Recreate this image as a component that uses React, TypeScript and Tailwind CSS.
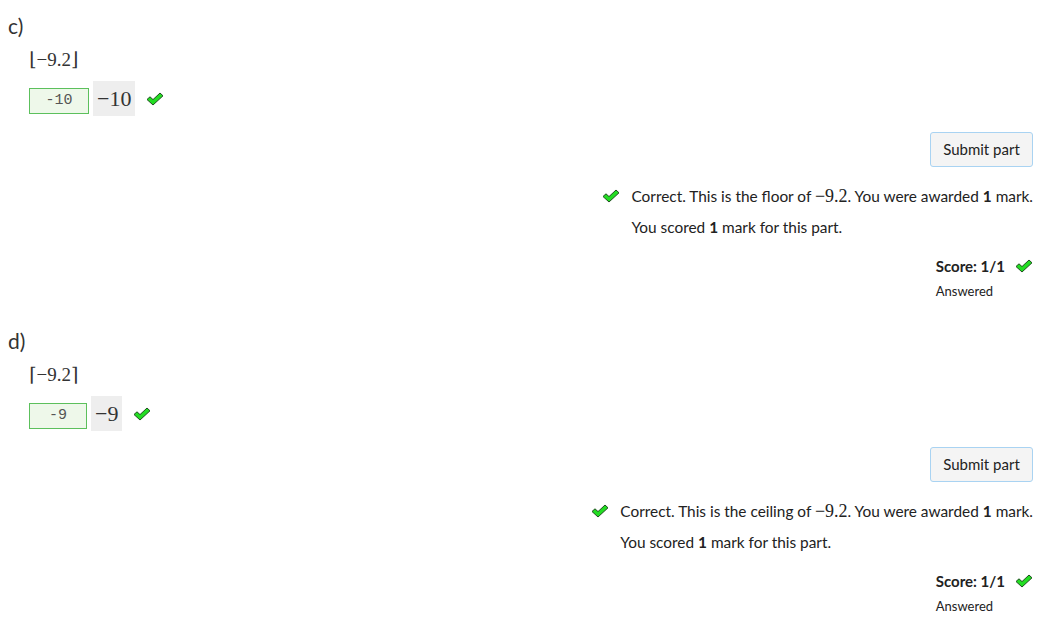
import React from 'react';

type PartProps = {
  label: string;
  question: string;
  answer: string;
  inputWidth: string;
  preview: string;
  word: string;
};

const Tick: React.FC<{ className?: string }> = ({ className }) => (
  <svg viewBox="0 0 18 14" width={18} height={14} className={className} aria-hidden="true">
    <polygon
      points="1,7.5 4,4.8 7,7.6 14,1 17,3.8 7,13"
      fill="#22dd22"
      stroke="#1f4f1f"
      strokeWidth={1}
      strokeLinejoin="round"
    />
  </svg>
);

const serif = { fontFamily: '"Liberation Serif", "DejaVu Serif", serif' };

const Part: React.FC<PartProps> = ({ label, question, answer, inputWidth, preview, word }) => {
  return (
    <div className="pt-[12px] pb-[14px]">
      <div className="h-[28px] pl-[8px] text-[21px] leading-[28px] text-[#333]">{label}</div>
      <div className="pl-[29px]">
        <div className="mt-[8px] h-[24px] text-[19px] leading-[24px] text-[#333]" style={serif}>
          {question}
        </div>
        <div className="mt-[9px] flex items-start">
          <div
            className={`${inputWidth} mt-[7px] flex h-[26px] items-center justify-center border border-[#5cc05c] bg-[#eef8ea] font-['Liberation_Mono',monospace] text-[15px] text-[#555]`}
          >
            {answer}
          </div>
          <div className="ml-[4px] flex h-[35px] items-center bg-[#eeeeee] px-[4px] text-[22px] text-[#333]" style={serif}>
            {preview}
          </div>
          <Tick className="ml-[11px] mt-[11px]" />
        </div>
      </div>
      <div className="mt-[16px] flex justify-end pr-[6px]">
        <button className="h-[35px] w-[103px] rounded-[3px] border border-[#a9d3f2] bg-[#f4f4f4] text-[15px] text-[#222]">
          Submit part
        </button>
      </div>
      <div className="mt-[14px] flex justify-end pr-[6px] text-[15.4px] text-[#222]">
        <div className="flex items-start">
          <Tick className="mt-[8px] mr-[11px]" />
          <div>
            <div className="h-[31px] leading-[31px]">
              Correct. This is the {word} of <span className="text-[18px]" style={serif}>−9.2</span>. You were awarded{' '}
              <b>1</b> mark.
            </div>
            <div className="h-[31px] leading-[31px]">
              You scored <b>1</b> mark for this part.
            </div>
          </div>
        </div>
      </div>
      <div className="mt-[11px] flex justify-end pr-[6px]">
        <div className="text-[#222]">
          <div className="flex h-[24px] items-center text-[15px] font-bold">
            Score: 1/1
            <Tick className="ml-[10px]" />
          </div>
          <div className="mt-[3px] h-[20px] text-[13px] leading-[20px]">Answered</div>
        </div>
      </div>
    </div>
  );
};

const App: React.FC = () => {
  return (
    <div className="min-h-[630px] w-[1039px] bg-white font-['Lato',sans-serif]">
      <Part label="c)" question="⌊−9.2⌋" answer="-10" inputWidth="w-[60px]" preview="−10" word="floor" />
      <Part label="d)" question="⌈−9.2⌉" answer="-9" inputWidth="w-[58px]" preview="−9" word="ceiling" />
    </div>
  );
};

export default App;
